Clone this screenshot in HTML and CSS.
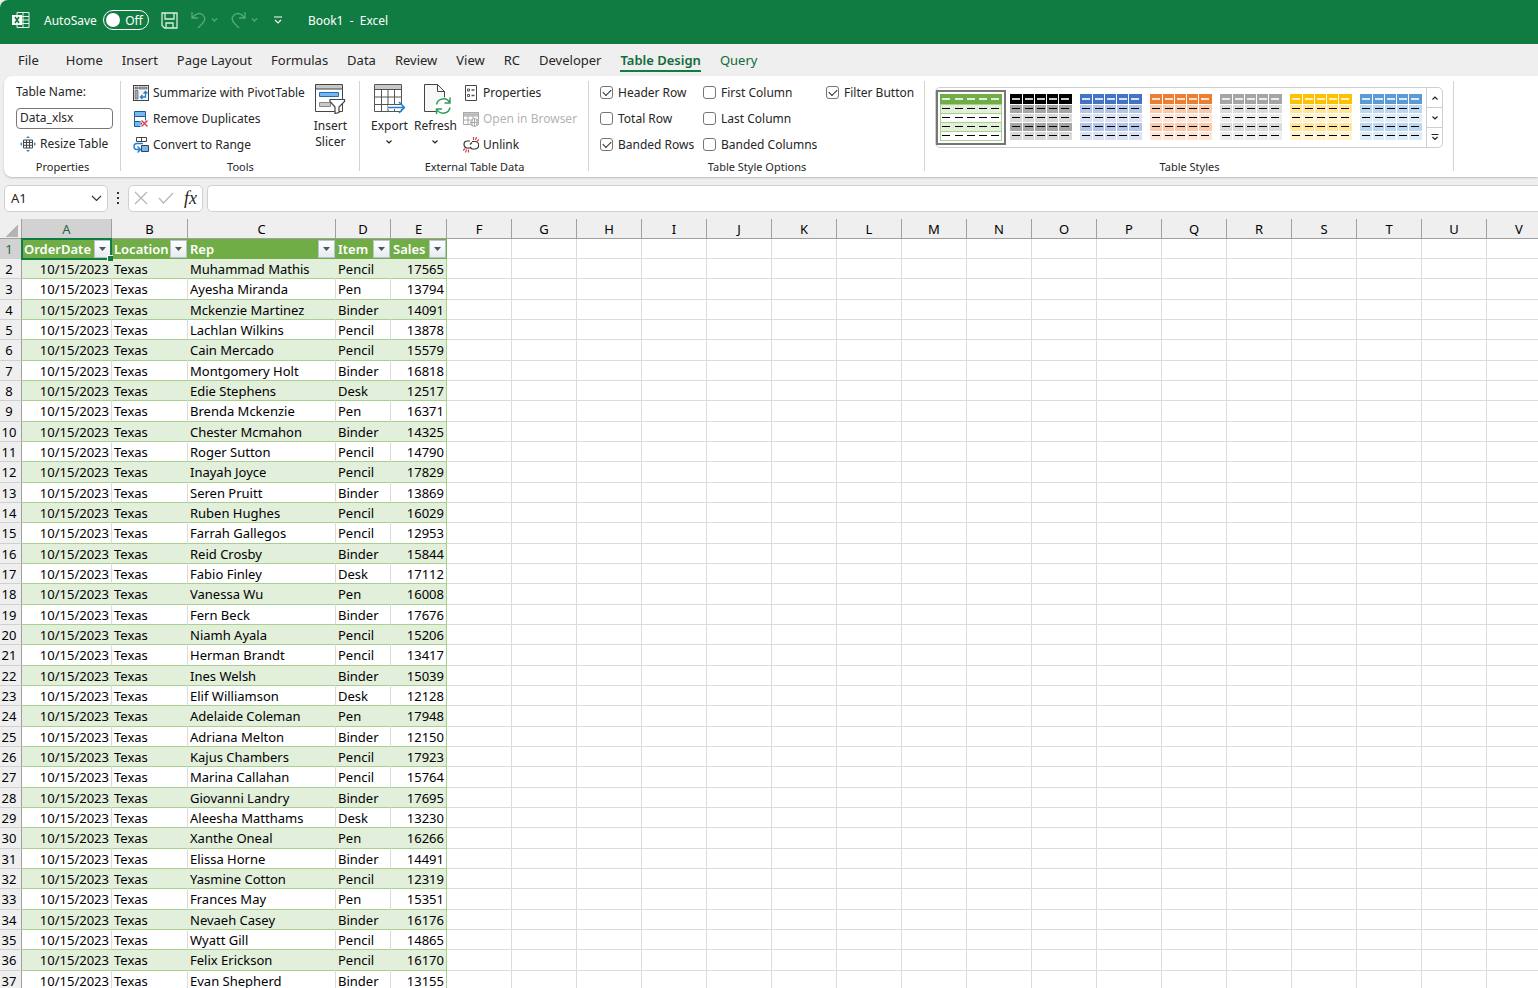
FILE: index.html
```html
<!DOCTYPE html>
<html lang="en">
<head>
    <meta charset="UTF-8">
    <meta name="viewport" content="width=device-width, initial-scale=1.0">
    <title>Book1 - Excel</title>
    <link rel="stylesheet" href="styles.css">
</head>
<body>
    <header class="title-bar">
        <svg class="app-icon" width="18" height="18" viewBox="0 0 18 18">
            <path d="M5 1.5h12v15H5zM11 1.5v15M5 5.5h12M5 9h12M5 12.5h12" fill="none" stroke="#e4f3ea"/>
            <rect x="0" y="4" width="10" height="10" fill="#fff"/>
            <path d="M3 6l4 6M7 6l-4 6" stroke="#107c41" stroke-width="1.6"/>
        </svg>
        <label class="autosave">AutoSave
            <span class="toggle"><input type="checkbox" aria-label="AutoSave"><span class="toggle-text">Off</span></span>
        </label>
        <button type="button" class="icon-btn save" aria-label="Save">
            <svg width="17" height="17" viewBox="0 0 17 17" fill="none" stroke="#d8efe1" stroke-width="1.3"><path d="M1 1h15v15H3.500L1 13.500zM4 1v6h9V1M5 16v-5h7v5"/></svg>
        </button>
        <button type="button" class="icon-btn" aria-label="Undo">
            <svg width="27" height="18" viewBox="0 0 27 18" fill="none" stroke="#55a97a" stroke-width="1.3"><path d="M1 1v6h6M1.500 6.500C5 2 9 1.500 12 4c3 3 2 6-1 9l-4 4"/><path d="M21 7.500l2.500 2.500L26 7.500"/></svg>
        </button>
        <button type="button" class="icon-btn" aria-label="Redo">
            <svg width="27" height="18" viewBox="0 0 27 18" fill="none" stroke="#55a97a" stroke-width="1.3"><path d="M14 1v6H8M13.500 6.500C10 2 6 1.500 3 4c-3 3-2 6 1 9l4 4"/><path d="M21 7.500l2.500 2.500L26 7.500"/></svg>
        </button>
        <button type="button" class="icon-btn customize" aria-label="Customize Quick Access Toolbar">
            <svg width="8" height="8" viewBox="0 0 8 8" fill="none" stroke="#fff" stroke-width="1.2"><path d="M0 1h8M1 4l3 3 3-3"/></svg>
        </button>
        <span class="doc-title">Book1&nbsp; -&nbsp; Excel</span>
    </header>

    <nav class="tabs">
        <a href="#" class="file">File</a>
        <a href="#">Home</a>
        <a href="#">Insert</a>
        <a href="#">Page Layout</a>
        <a href="#">Formulas</a>
        <a href="#">Data</a>
        <a href="#">Review</a>
        <a href="#">View</a>
        <a href="#">RC</a>
        <a href="#">Developer</a>
        <a href="#" class="active">Table Design</a>
        <a href="#" class="contextual">Query</a>
    </nav>

    <section class="ribbon">
        <div class="group properties">
            <div class="group-body stack">
                <label for="table-name">Table Name:</label>
                <div class="cmd-row"><input type="text" id="table-name" class="table-name" value="Data_xlsx"></div>
                <button type="button" class="cmd resize">
                    <svg width="16" height="16" viewBox="0 0 16 16"><path d="M3.500 4h9v8h-9zM3.500 6.500h9M3.500 9.300h9M6.500 4v8M9.500 4v8" fill="none" stroke="#444"/><path d="M8 0l2 2H6zM8 16l2-2H6zM0 8l2-2v4zM16 8l-2-2v4z" fill="#2b88d8"/></svg>
                    Resize Table
                </button>
            </div>
            <div class="group-label">Properties</div>
        </div>

        <div class="group tools">
            <div class="group-body">
                <div class="stack">
                    <button type="button" class="cmd">
                        <svg width="16" height="16" viewBox="0 0 16 16"><rect x=".5" y=".5" width="15" height="15" fill="#f5f5f5" stroke="#444"/><path d="M2 2h3v2H2zM6 2h8v2H6zM2 5.500h3V14H2z" fill="#a8a8a8" stroke="#555" stroke-width=".6"/><path d="M8 12h4.500V7M9.500 10L7.500 12l2 2M10.500 8.500l2-2 2 2" fill="none" stroke="#1f80d0" stroke-width="1.300"/></svg>
                        Summarize with PivotTable
                    </button>
                    <button type="button" class="cmd">
                        <svg width="16" height="16" viewBox="0 0 16 16"><path d="M1.500.5h11v5h-11zM1.500 10.500h7v5h-7z" fill="#75b7ee" stroke="#1c5d99"/><path d="M1.500 5.500h11v5h-11z" fill="#fff" stroke="#1c5d99"/><path d="M8 9l7 7M15 9l-7 7" stroke="#fff" stroke-width="3"/><path d="M8.500 9.500l6 6M14.500 9.500l-6 6" stroke="#e03c46" stroke-width="1.400"/></svg>
                        Remove Duplicates
                    </button>
                    <button type="button" class="cmd">
                        <svg width="16" height="16" viewBox="0 0 16 16"><path d="M3.500.5h10v4h-10zM8.500.5v4" fill="#fff" stroke="#444"/><path d="M8.500 8.500h7v6h-7z" fill="#75b7ee" stroke="#345"/><path d="M10 6.500H4C0 6.500 0 12.500 4 12.500h3M4.500 9.500l3 3-3 3" fill="none" stroke="#1f80d0" stroke-width="1.400"/></svg>
                        Convert to Range
                    </button>
                </div>
                <button type="button" class="big-cmd">
                    <svg width="32" height="32" viewBox="0 0 32 32"><path d="M1.500 2.500h27v27h-27z" fill="#fff" stroke="#444"/><path d="M2 3h26v4H2z" fill="#c8c8c8"/><path d="M1.500 7h27" stroke="#444"/><path d="M5.500 10.500h19v4h-19z" fill="#75b7ee" stroke="#1f6fb5"/><path d="M5.500 20.500h11v4h-11z" fill="#c8c8c8" stroke="#888"/><path d="M16 17.500h14.500v2L25 25v5.500l-4 1V25l-5-5.500z" fill="#fff" stroke="#444" stroke-width="1.200"/></svg>
                    <span>Insert<br>Slicer</span>
                </button>
            </div>
            <div class="group-label">Tools</div>
        </div>

        <div class="group external">
            <div class="group-body">
                <button type="button" class="big-cmd">
                    <svg width="32" height="32" viewBox="0 0 32 32"><path d="M1.500 2.500h27v27h-27z" fill="#fff"/><path d="M1.500 3h27v4h-27z" fill="#c8c8c8"/><path d="M1.500 2.500h27v27h-27zM1.500 7.500h27M1.500 15h27M1.500 22.500h27M8.500 7.500v22M15 7.500v22M21.500 7.500v22" fill="none" stroke="#555"/><path d="M15 25h16" stroke="#fff" stroke-width="4"/><path d="M15 25.500h16M26 20l5.500 5.500L26 31" fill="none" stroke="#1f80d0" stroke-width="1.500"/></svg>
                    <span>Export</span>
                    <svg class="caret" width="6" height="4" viewBox="0 0 6 4"><path d="M.5.5L3 3 5.500.5"/></svg>
                </button>
                <button type="button" class="big-cmd">
                    <svg width="32" height="32" viewBox="0 0 32 32"><path d="M5.500 2.500h13l7 7v20h-20z" fill="#f8f8f8" stroke="#444"/><path d="M18.500 2.500v7h7" fill="none" stroke="#444"/><circle cx="24" cy="24" r="9" fill="#fff"/><path d="M17.500 22.500a7 7 0 0 1 13-2M31 15.500v5.500h-5.500M31 25.500a7 7 0 0 1-13 2M17.500 32v-5h5.500" fill="none" stroke="#2f9e5b" stroke-width="1.500"/></svg>
                    <span>Refresh</span>
                    <svg class="caret" width="6" height="4" viewBox="0 0 6 4"><path d="M.5.5L3 3 5.500.5"/></svg>
                </button>
                <div class="stack">
                    <button type="button" class="cmd">
                        <svg width="16" height="16" viewBox="0 0 16 16"><path d="M2.500.5h11v15h-11z" fill="#fff" stroke="#444"/><path d="M4.500 4h2v2h-2zM4.500 9.500h2v2h-2z" fill="none" stroke="#555"/><path d="M8.500 5h3M8.500 10.500h3" stroke="#555" stroke-width="1.300"/></svg>
                        Properties
                    </button>
                    <button type="button" class="cmd" disabled>
                        <svg width="16" height="16" viewBox="0 0 16 16" fill="none" stroke="#a8a8a8"><path d="M.5 1.500h15v12H.5zM.5 5h15M.5 9h7M5 5v8.500M10 5v3"/><path d="M.5 1.500h15V4H.5z" fill="#c8c8c8"/><circle cx="11.500" cy="11.500" r="4" fill="#fff"/><path d="M7.500 11.500h8M11.500 7.500v8M9.500 8.500q-1.500 3 0 6M13.500 8.500q1.500 3 0 6"/></svg>
                        Open in Browser
                    </button>
                    <button type="button" class="cmd">
                        <svg width="16" height="16" viewBox="0 0 16 16" fill="none"><path d="M7 4H4.500a3.500 3.500 0 0 0 0 7H8M7 7.500L9 5.500M9 4.500h3a3.500 3.500 0 0 1 0 7.500H9L7 10" stroke="#333" stroke-width="1.200"/><path d="M10.500 3V0M12.500 3l1-3M14 4.500l2-2M5.500 12.500v3M3.500 12.500l-1 3M2 11.500l-2 2" stroke="#d83b4a" stroke-width="1.200"/></svg>
                        Unlink
                    </button>
                </div>
            </div>
            <div class="group-label">External Table Data</div>
        </div>

        <div class="group options">
            <div class="group-body check-grid">
                <label class="check"><input type="checkbox" checked>Header Row</label>
                <label class="check"><input type="checkbox">First Column</label>
                <label class="check"><input type="checkbox" checked>Filter Button</label>
                <label class="check"><input type="checkbox">Total Row</label>
                <label class="check"><input type="checkbox">Last Column</label>
                <span></span>
                <label class="check"><input type="checkbox" checked>Banded Rows</label>
                <label class="check"><input type="checkbox">Banded Columns</label>
            </div>
            <div class="group-label">Table Style Options</div>
        </div>

        <div class="group styles">
            <div class="group-body">
                <div class="gallery">
                    <div class="swatches" id="swatches"></div>
                    <div class="gallery-nav">
                        <button type="button" aria-label="Previous row"><svg class="caret" width="6" height="4" viewBox="0 0 6 4"><path d="M.5 3.500L3 1l2.500 2.500"/></svg></button>
                        <button type="button" aria-label="Next row"><svg class="caret" width="6" height="4" viewBox="0 0 6 4"><path d="M.5.5L3 3 5.500.5"/></svg></button>
                        <button type="button" aria-label="More styles"><svg class="caret" width="8" height="7" viewBox="0 0 8 7"><path d="M.5.5h7M1.500 3L4 5.500 6.500 3"/></svg></button>
                    </div>
                </div>
            </div>
            <div class="group-label">Table Styles</div>
        </div>
    </section>

    <div class="formula-bar">
        <div class="name-box">
            <input type="text" value="A1" aria-label="Name box">
            <button type="button" aria-label="Names"><svg width="11" height="7" viewBox="0 0 11 7" fill="none" stroke="#333" stroke-width="1.200"><path d="M1 1l4.500 4.500L10 1"/></svg></button>
        </div>
        <svg class="dots" width="4" height="12" viewBox="0 0 4 12" fill="#333"><path d="M1 0h2v2H1zM1 5h2v2H1zM1 10h2v2H1z"/></svg>
        <div class="entry-buttons">
            <button type="button" aria-label="Cancel" disabled><svg width="14" height="14" viewBox="0 0 14 14" stroke="#b5b5b5" stroke-width="1.200"><path d="M1 1l12 12M13 1L1 13"/></svg></button>
            <button type="button" aria-label="Enter" disabled><svg width="16" height="12" viewBox="0 0 16 12" fill="none" stroke="#b5b5b5" stroke-width="1.200"><path d="M1 6l4.500 5L15 1"/></svg></button>
            <button type="button" class="fx" aria-label="Insert function">fx</button>
        </div>
        <input type="text" class="formula" aria-label="Formula">
    </div>

    <main class="sheet">
        <table id="grid"></table>
    </main>

    <script src="script.js"></script>
</body>
</html>
```

FILE: styles.css
```css
* {
    box-sizing: border-box;
}
body {
    margin: 0;
    height: 100vh;
    overflow: hidden;
    display: flex;
    flex-direction: column;
    background: #f0efef;
    color: #262626;
    font-family: "Noto Sans", "Open Sans", sans-serif;
    font-size: 12px;
}
button, input {
    font: inherit;
    color: inherit;
}
button {
    background: none;
    border: none;
    padding: 0;
}
svg {
    display: block;
    flex: none;
}

/* title bar */
.title-bar {
    display: flex;
    align-items: center;
    height: 44px;
    flex: none;
    padding: 0 12px 4px;
    background: #107c41;
    color: #fff;
    border-top-left-radius: 8px;
}
.autosave {
    display: flex;
    align-items: center;
    gap: 6px;
    margin-left: 14px;
}
.toggle {
    display: flex;
    align-items: center;
    width: 46px;
    height: 20px;
    padding: 0 5px 0 2px;
    border: 1px solid #fff;
    border-radius: 10px;
    justify-content: space-between;
}
.toggle input {
    appearance: none;
    width: 14px;
    height: 14px;
    margin: 0;
    border-radius: 50%;
    background: #fff;
}
.icon-btn {
    margin-right: 13px;
}
.icon-btn.save {
    margin-left: 12px;
}
.icon-btn.customize {
    margin: 0 26px 0 3px;
}

/* ribbon tabs */
.tabs {
    display: flex;
    flex: none;
    gap: 19px;
    height: 32px;
    padding: 6px 18px 0;
    font-size: 13px;
}
.tabs a {
    height: 22px;
    line-height: 20px;
    color: inherit;
    text-decoration: none;
    white-space: nowrap;
}
.tabs .file {
    margin-right: 8px;
}
.tabs .active {
    color: #0f6b38;
    font-weight: 600;
    border-bottom: 2px solid #107c41;
}
.tabs .contextual {
    color: #0f6b38;
}

/* ribbon */
.ribbon {
    display: flex;
    flex: none;
    height: 101px;
    margin-left: 4px;
    background: #fff;
    border-radius: 8px 0 0 8px;
    box-shadow: 0 1px 2px #bbb;
}
.group {
    position: relative;
    display: flex;
    flex-direction: column;
    padding-top: 3px;
}
.group::after {
    content: "";
    position: absolute;
    top: 5px;
    right: 0;
    bottom: 6px;
    width: 1px;
    background: #d4d4d4;
}
.group-body {
    display: flex;
    height: 79px;
}
.group-label {
    line-height: 18px;
    text-align: center;
    font-size: 11px;
}
.properties { width: 117px; }
.tools { width: 239px; }
.external { width: 229px; }
.options { width: 336px; }
.styles { width: 529px; }

.stack {
    display: flex;
    flex-direction: column;
    padding-top: 1px;
}
.stack > * {
    height: 26px;
    line-height: 26px;
}
.cmd {
    display: flex;
    align-items: center;
    gap: 4px;
    white-space: nowrap;
}
.cmd:disabled {
    color: #b4b4b4;
}
.properties .group-body {
    padding: 0 8px 0 12px;
}
.cmd-row {
    display: flex;
    align-items: center;
}
.table-name {
    width: 97px;
    height: 21px;
    padding: 0 3px;
    border: 1px solid #777;
    border-radius: 4px;
}
.resize {
    padding-left: 4px;
}
.tools .group-body {
    padding: 0 13px 0 12px;
    justify-content: space-between;
}
.big-cmd {
    display: flex;
    flex-direction: column;
    align-items: center;
    padding-top: 3px;
    line-height: 16px;
}
.big-cmd span {
    margin-top: 4px;
}
.big-cmd .caret {
    margin-top: 6px;
}
.caret {
    fill: none;
    stroke: #222;
    stroke-width: 1.2;
}
.external .group-body {
    gap: 6px;
    padding-left: 11px;
}

.check-grid {
    display: grid;
    grid-template-columns: 103px 123px auto;
    grid-auto-rows: 26px;
    padding-left: 11px;
}
.check {
    display: flex;
    align-items: center;
    gap: 5px;
    white-space: nowrap;
}
.check input {
    position: relative;
    appearance: none;
    width: 13px;
    height: 13px;
    margin: 0;
    border: 1px solid #767676;
    border-radius: 3px;
    background: #fff;
}
.check input:checked::before {
    content: "";
    position: absolute;
    left: 2px;
    top: 2px;
    width: 7px;
    height: 4px;
    border-left: 1px solid #222;
    border-bottom: 1px solid #222;
    transform: rotate(-45deg);
}

.gallery {
    display: flex;
    height: 61px;
    margin: 8px 0 0 10px;
    border: 1px solid #cfcfcf;
    border-radius: 5px;
}
.swatches {
    display: flex;
    align-items: center;
}
.swatches button {
    display: flex;
    align-items: center;
    justify-content: center;
    width: 70px;
    height: 55px;
}
.swatches .selected {
    border: 2px solid #767676;
}
.gallery-nav {
    display: flex;
    flex-direction: column;
    width: 16px;
    border-left: 1px solid #cfcfcf;
}
.gallery-nav button {
    flex: 1;
    display: flex;
    align-items: center;
    justify-content: center;
}
.gallery-nav button + button {
    border-top: 1px solid #cfcfcf;
}

/* formula bar */
.formula-bar {
    display: flex;
    align-items: center;
    flex: none;
    height: 42px;
    padding-left: 4px;
}
.name-box, .entry-buttons, .formula {
    display: flex;
    align-items: center;
    height: 27px;
    border: 1px solid #d0d0d0;
    border-radius: 5px;
    background: #fff;
}
.name-box {
    width: 104px;
    padding: 0 5px 0 6px;
    font-size: 13px;
}
.name-box input {
    flex: 1;
    min-width: 0;
    padding: 0;
    border: none;
}
.dots {
    margin: 0 8px;
}
.entry-buttons {
    width: 75px;
    justify-content: space-between;
    padding: 0 5px;
}
.fx {
    font: italic 18px/20px "Liberation Serif", serif;
}
.formula {
    flex: 1;
    margin-left: 4px;
    border-right: none;
    border-radius: 5px 0 0 5px;
}

/* worksheet */
.sheet {
    flex: 1;
    overflow: hidden;
    background: #fff;
}
#grid {
    width: 1552px;
    table-layout: fixed;
    border-collapse: separate;
    border-spacing: 0;
    color: #000;
    font-size: 13px;
    line-height: 18px;
}
#grid th, #grid td {
    height: 20px;
    padding: 0 2px;
    border-right: 1px solid #dcdcdc;
    border-bottom: 1px solid #dcdcdc;
    text-align: left;
    white-space: nowrap;
}
#grid tbody tr:nth-child(3n) > * {
    height: 21px;
}
#grid thead th {
    background: #f0efef;
    border-color: #a0a0a0;
    text-align: center;
    font-weight: normal;
}
#grid tbody th[scope="row"] {
    padding: 0 3px 0 0;
    background: #f0efef;
    border-right-color: #a0a0a0;
    border-bottom-color: #d0d0d0;
    text-align: center;
    font-weight: normal;
}
#grid thead th.current, #grid tbody th.current {
    background: #d2d2d2;
    color: #1e6b41;
}
#grid .corner {
    padding: 0;
    background: #f0efef;
    border-color: #a0a0a0;
}
#grid .corner div {
    width: 12px;
    height: 12px;
    margin: 4px 0 0 6px;
    background: linear-gradient(135deg, transparent 50%, #b4b4b4 50%);
}
#grid .num {
    text-align: right;
}
#grid .data {
    border-bottom-color: #a9d08e;
}
#grid .data.last {
    border-right-color: #a9d08e;
}
#grid .band .data {
    background: #e2efda;
    border-right-color: #e2efda;
}
#grid .band .data.last {
    border-right-color: #a9d08e;
}
#grid .field {
    position: relative;
    background: #70ad47;
    border-color: #70ad47;
    color: #fff;
    font-weight: 600;
}
.filter {
    position: absolute;
    right: 0;
    top: 1px;
    width: 17px;
    height: 18px;
    display: flex;
    align-items: center;
    justify-content: center;
    background: linear-gradient(#fff, #e6ebf2);
    border: 1px solid #b8c4d0;
}
.selection {
    position: absolute;
    left: -1px;
    top: -1px;
    right: -1px;
    bottom: -2px;
    border: 2px solid #107c41;
    z-index: 1;
}
.selection::after {
    content: "";
    position: absolute;
    right: -3px;
    bottom: -3px;
    width: 5px;
    height: 5px;
    background: #107c41;
    border-top: 1px solid #fff;
    border-left: 1px solid #fff;
}
```

FILE: script.js
```js
const columnWidths = [22, 90, 76, 148, 55, 56];
const letters = "ABCDEFGHIJKLMNOPQRSTUV".split("");
const fields = ["OrderDate", "Location", "Rep", "Item", "Sales"];

const rows = [
    ["Muhammad Mathis", "Pencil", 17565],
    ["Ayesha Miranda", "Pen", 13794],
    ["Mckenzie Martinez", "Binder", 14091],
    ["Lachlan Wilkins", "Pencil", 13878],
    ["Cain Mercado", "Pencil", 15579],
    ["Montgomery Holt", "Binder", 16818],
    ["Edie Stephens", "Desk", 12517],
    ["Brenda Mckenzie", "Pen", 16371],
    ["Chester Mcmahon", "Binder", 14325],
    ["Roger Sutton", "Pencil", 14790],
    ["Inayah Joyce", "Pencil", 17829],
    ["Seren Pruitt", "Binder", 13869],
    ["Ruben Hughes", "Pencil", 16029],
    ["Farrah Gallegos", "Pencil", 12953],
    ["Reid Crosby", "Binder", 15844],
    ["Fabio Finley", "Desk", 17112],
    ["Vanessa Wu", "Pen", 16008],
    ["Fern Beck", "Binder", 17676],
    ["Niamh Ayala", "Pencil", 15206],
    ["Herman Brandt", "Pencil", 13417],
    ["Ines Welsh", "Binder", 15039],
    ["Elif Williamson", "Desk", 12128],
    ["Adelaide Coleman", "Pen", 17948],
    ["Adriana Melton", "Binder", 12150],
    ["Kajus Chambers", "Pencil", 17923],
    ["Marina Callahan", "Pencil", 15764],
    ["Giovanni Landry", "Binder", 17695],
    ["Aleesha Matthams", "Desk", 13230],
    ["Xanthe Oneal", "Pen", 16266],
    ["Elissa Horne", "Binder", 14491],
    ["Yasmine Cotton", "Pencil", 12319],
    ["Frances May", "Pen", 15351],
    ["Nevaeh Casey", "Binder", 16176],
    ["Wyatt Gill", "Pencil", 14865],
    ["Felix Erickson", "Pencil", 16170],
    ["Evan Shepherd", "Binder", 13155]
];

const emptyCells = "<td></td>".repeat(letters.length - fields.length);

const cols = ["", ...letters].map((_, i) => `<col style="width:${columnWidths[i] || 65}px">`).join("");

const head = letters.map((l, i) => `<th scope="col" class="${i === 0 ? "current" : ""}">${l}</th>`).join("");

const fieldCells = fields.map((name, i) => `
    <th class="field">${name}
        <button type="button" class="filter" aria-label="Filter ${name}"><svg width="7" height="4" viewBox="0 0 7 4"><path d="M0 0h7L3.500 4z" fill="#555"/></svg></button>
        ${i === 0 ? '<div class="selection"></div>' : ""}
    </th>`).join("");

const dataRows = rows.map(([rep, item, sales], i) => `
    <tr class="${i % 2 === 0 ? "band" : ""}">
        <th scope="row">${i + 2}</th>
        <td class="data num">10/15/2023</td>
        <td class="data">Texas</td>
        <td class="data">${rep}</td>
        <td class="data">${item}</td>
        <td class="data num last">${sales}</td>${emptyCells}
    </tr>`).join("");

document.getElementById("grid").innerHTML = `
    <colgroup>${cols}</colgroup>
    <thead><tr><td class="corner"><div></div></td>${head}</tr></thead>
    <tbody><tr><th scope="row" class="current">1</th>${fieldCells}${emptyCells}</tr>${dataRows}</tbody>`;

// header colour, odd band, even band
const tableStyles = [
    ["Green", "#70ad47", "#e2efda", "#ffffff"],
    ["Black", "#000000", "#a6a6a6", "#d9d9d9"],
    ["Blue", "#4472c4", "#b4c6e7", "#d9e1f2"],
    ["Orange", "#ed7d31", "#f8cbad", "#fce4d6"],
    ["Gray", "#a5a5a5", "#dbdbdb", "#ededed"],
    ["Gold", "#ffc000", "#ffe699", "#fff2cc"],
    ["Light blue", "#5b9bd5", "#bdd7ee", "#ddebf7"]
];

function swatch([name, header, odd, even], index) {
    const selected = index === 0;
    let shapes = "";
    for (let r = 0; r < 5; r++) {
        const y = r === 0 ? 0 : 2 + r * 9;
        const h = r === 0 ? 10 : 8;
        const fill = r === 0 ? header : r % 2 ? odd : even;
        if (selected) {
            shapes += `<rect x="0" y="${y}" width="62" height="${h}" fill="${fill}"/>`;
            shapes += `<path d="M0 ${y + h + .5}h62" stroke="#a9d08e"/>`;
        }
        for (let c = 0; c < 5; c++) {
            const x = c * 12 + (c ? 1 : 0);
            if (!selected) {
                shapes += `<rect x="${x}" y="${y}" width="${c === 4 ? 13 : c ? 11 : 12}" height="${h}" fill="${fill}"/>`;
            }
            shapes += `<rect x="${x + 2}" y="${y + (r ? 3 : 4)}" width="8" height="${r ? 1 : 2}" fill="${r ? "#000" : "#fff"}" fill-opacity="${r ? 1 : .8}"/>`;
        }
    }
    if (selected) {
        shapes += '<path d="M.5 10v37M61.500 10v37" stroke="#a9d08e"/>';
    }
    return `<button type="button" class="${selected ? "selected" : ""}" aria-label="${name} table style">
        <svg width="62" height="47" viewBox="0 0 62 47">${shapes}</svg></button>`;
}

document.getElementById("swatches").innerHTML = tableStyles.map(swatch).join("");
```
